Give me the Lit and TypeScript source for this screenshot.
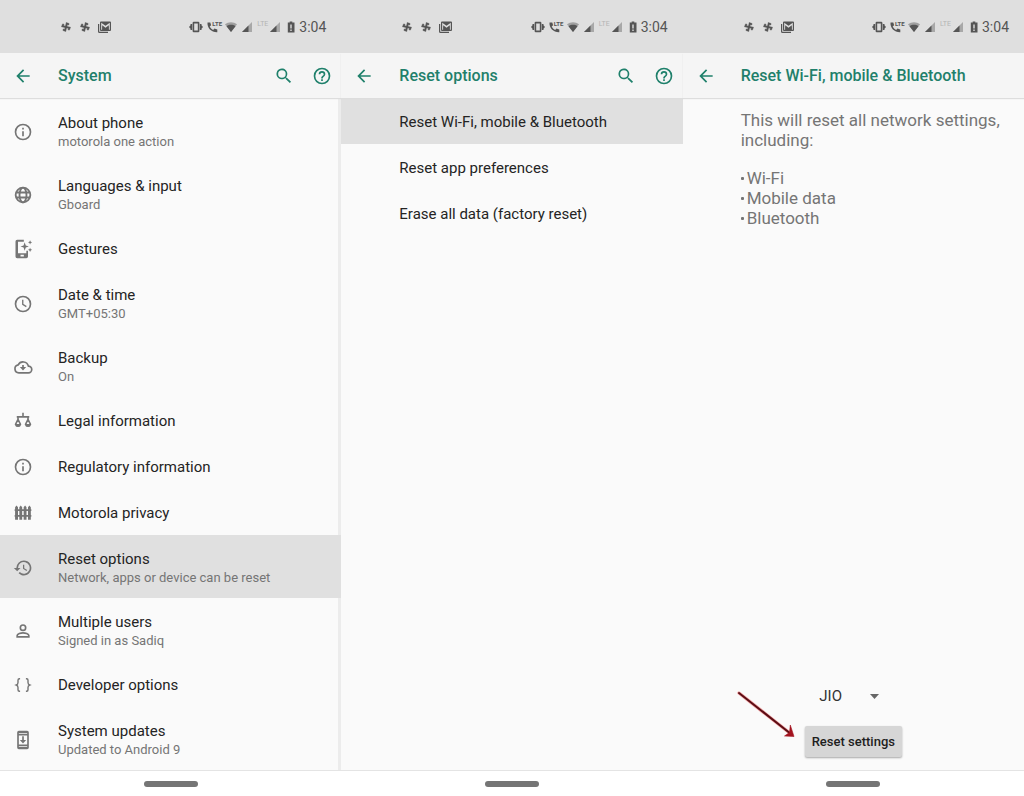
import { LitElement, html, css, svg, nothing } from "lit";
import { customElement, property } from "lit/decorators.js";

const glyphs: Record<string, unknown> = {
  back: svg`<path d="M20 11H7.800l5.600-5.600L12 4l-8 8 8 8 1.400-1.400L7.800 13H20z"/>`,
  search: svg`<path d="M15.500 14h-.8l-.3-.3A6.500 6.500 0 1 0 13.700 14.400l.3.3v.8l5 5 1.500-1.500zm-6 0a4.500 4.500 0 1 1 0-9 4.500 4.500 0 0 1 0 9z"/>`,
  help: svg`<path d="M11 18h2v-2h-2zM12 2a10 10 0 1 0 0 20 10 10 0 0 0 0-20zm0 18a8 8 0 1 1 0-16 8 8 0 0 1 0 16zm0-14a4 4 0 0 0-4 4h2a2 2 0 1 1 4 0c0 2-3 1.800-3 5h2c0-2.200 3-2.500 3-5a4 4 0 0 0-4-4z"/>`,
  info: svg`<path d="M11 7h2v2h-2zm0 4h2v6h-2zM12 2a10 10 0 1 0 0 20 10 10 0 0 0 0-20zm0 18a8 8 0 1 1 0-16 8 8 0 0 1 0 16z"/>`,
  globe: svg`<g fill="none" stroke="currentColor" stroke-width="2.200"><circle cx="12" cy="12" r="8.800"/><ellipse cx="12" cy="12" rx="4.200" ry="8.800"/><path d="M3.600 9h16.800M3.600 15h16.800"/></g>`,
  gestures: svg`<path d="M5 1h8v2.200H6V17h10v-3h2v7a2 2 0 0 1-2 2H5a2 2 0 0 1-2-2V3a2 2 0 0 1 2-2zm4 18v2h4v-2zM14 4l1.300 3.700L19 9l-3.700 1.300L14 14l-1.300-3.700L9 9l3.700-1.300zM20.500 1.500l.8 1.700 1.700.8-1.700.8-.8 1.700-.8-1.700-1.700-.8 1.700-.8zM20.500 10.500l.8 1.700 1.700.8-1.700.8-.8 1.700-.8-1.700-1.700-.8 1.700-.8z"/>`,
  clock: svg`<g fill="none" stroke="currentColor" stroke-width="2"><circle cx="12" cy="12" r="9"/><path d="M11.700 7v5.500l4.300 2.600" stroke-width="1.600"/></g>`,
  backup: svg`<path fill="none" stroke="currentColor" stroke-width="2" d="M18.500 11A6.600 6.600 0 0 0 6.200 9.500 4.800 4.800 0 0 0 7 19h11.500a4 4 0 0 0 0-8z"/><path d="M11 9.500h2V12h2.800L12 16.300 8.200 12H11z"/>`,
  legal: svg`<path fill="none" stroke="currentColor" stroke-width="1.900" d="M12 2v5M4.500 7h15M6 7v3M18 7v3"/><path fill="none" stroke="currentColor" stroke-width="1.900" stroke-linejoin="round" d="M6 10l-3 6a3.100 3.100 0 0 0 6 0zM18 10l-3 6a3.100 3.100 0 0 0 6 0z"/><path d="M3 15.500h6l-1 3H4zM15 15.500h6l-1 3h-4z"/>`,
  fence: svg`<path d="M2.500 5l1.700-2L6 5v15H2.500zM7.600 5l1.700-2L11 5v15H7.600zM12.800 5l1.700-2 1.700 2v15h-3.400zM18 5l1.700-2 1.700 2v15H18zM2 7.500h20v2H2zM2 14.500h20v2H2z"/>`,
  restore: svg`<path d="M13 3a9 9 0 0 0-9 9H1l4 4 4-4H6a7 7 0 1 1 2.100 4.900l-1.400 1.500A9 9 0 1 0 13 3zm-1 5v5l4.200 2.500.8-1.200-3.500-2.100V8z"/>`,
  person: svg`<g fill="none" stroke="currentColor" stroke-width="2"><circle cx="12" cy="8" r="3.200"/><path d="M5 19v-1.500c0-2 4.500-3.300 7-3.300s7 1.300 7 3.300V19z"/></g>`,
  braces: svg`<path fill="none" stroke="currentColor" stroke-width="1.700" d="M8.500 4.500H7.700C6.500 4.500 6 5.200 6 6.300V9c0 1.500-.6 2.500-2 3 1.400.5 2 1.500 2 3v2.700c0 1.100.5 1.800 1.700 1.800h.8M15.500 4.500h.8c1.200 0 1.700.7 1.700 1.800V9c0 1.500.6 2.500 2 3-1.400.5-2 1.500-2 3v2.700c0 1.100-.5 1.800-1.700 1.800h-.8"/>`,
  update: svg`<path fill-rule="evenodd" d="M17 1H7a2 2 0 0 0-2 2v18a2 2 0 0 0 2 2h10a2 2 0 0 0 2-2V3a2 2 0 0 0-2-2zM7 3.500h10v1H7zM7 19.500h10v1H7zM7 6.500h10v11H7z"/><path d="M11 7.500h2V12h2.800L12 16.300 8.200 12H11z"/>`,
};

const icon = (name: string) =>
  html`<svg class="icon" viewBox="0 0 24 24" fill="currentColor" aria-hidden="true">${glyphs[name]}</svg>`;

const iconStyles = css`
  .icon {
    display: block;
    flex: none;
    width: 20px;
    height: 20px;
  }
`;

@customElement("status-bar")
class StatusBar extends LitElement {
  static styles = css`
    :host {
      display: flex;
      align-items: center;
      justify-content: space-between;
      box-sizing: border-box;
      height: 53px;
      padding: 0 15px 0 60px;
      background: #dfdfdf;
      color: #555;
      font-size: 14px;
      line-height: 16px;
    }
    .group {
      display: flex;
      align-items: center;
    }
    .notices {
      gap: 7px;
    }
    .signals {
      gap: 4px;
    }
    svg {
      display: block;
      height: 14px;
      fill: currentColor;
    }
    .call {
      display: flex;
      align-items: flex-start;
      width: 14px;
    }
    .call svg {
      flex: none;
    }
    .tag {
      margin-left: -6px;
      font-size: 6px;
      line-height: 7px;
      font-weight: 700;
    }
    .lte {
      color: #b4b4b4;
      font-size: 7px;
      line-height: 8px;
      padding-bottom: 5px;
      margin-right: -3px;
    }
    .battery {
      margin-left: 2px;
    }
  `;

  private fan() {
    return html`<svg width="12" viewBox="0 0 12 14" aria-hidden="true">
      <g transform="rotate(12 6 7)" stroke="currentColor" stroke-width=".4"><path d="M5.300 7V2.500L8.300 3v1.500H6.800V7zM6 6.300h4.500L10 9.300H8.500V7.800H6zM6.700 7v4.500L3.700 11V9.500h1.500V7zM6 7.700H1.500L2 4.700h1.500v1.500H6z"/></g>
    </svg>`;
  }

  private signal() {
    return html`<svg width="12" viewBox="0 0 12 14" aria-hidden="true">
      <path opacity=".4" d="M11 2v10H1z"/><path d="M7.500 5.500V12H1z"/>
    </svg>`;
  }

  render() {
    return html`
      <div class="group notices">
        ${this.fan()}${this.fan()}
        <svg width="13" viewBox="0 0 13 14" aria-hidden="true">
          <path d="M0 4h1.200v7.800H10V13H1.500A1.500 1.500 0 0 1 0 11.500z"/>
          <path fill-rule="evenodd" d="M3 1.500h9a1 1 0 0 1 1 1v7.500a1 1 0 0 1-1 1H3a1 1 0 0 1-1-1V2.500a1 1 0 0 1 1-1zM3.200 2.700v7.100h1V5.200l3.300 2.500 3.300-2.500v4.600h1V2.700L7.500 5.800z"/>
          <path opacity=".6" d="M4.200 6.500l3.300 2.400 3.300-2.400v3.400H4.200z"/>
        </svg>
      </div>
      <div class="group signals">
        <svg width="14" viewBox="0 0 14 14" aria-hidden="true">
          <path fill-rule="evenodd" d="M4.800 1.800h4.400a1.200 1.200 0 0 1 1.200 1.200v8a1.200 1.200 0 0 1-1.200 1.200H4.800A1.200 1.200 0 0 1 3.600 11V3a1.200 1.200 0 0 1 1.200-1.200zM5.200 3.500v7h3.600v-7z"/>
          <path d="M1.500 4h1.700v6H1.500V8.700L0 7l1.500-1.700zM12.500 4h-1.700v6h1.700V8.700L14 7l-1.500-1.700z"/>
        </svg>
        <span class="call">
          <svg width="11" viewBox="0 0 11 14" aria-hidden="true">
            <path d="M.5 2.500H3.300l.8 2.700-1.400 1.400c.7 1.500 1.900 2.600 3.400 3.400L7.500 8.600l2.800.9V12.300C4.500 12.500 0 8 .5 2.500z"/>
          </svg>
          <span class="tag">LTE</span>
        </span>
        <svg width="12" viewBox="0 0 12 14" aria-hidden="true">
          <path opacity=".45" d="M0 4.300C3.500 1.600 8.500 1.600 12 4.300L6 12z"/>
          <path d="M1.500 6.200c2.700-1.900 6.300-1.900 9 0L6 12z"/>
        </svg>
        ${this.signal()}
        <span class="lte">LTE</span>
        ${this.signal()}
        <svg class="battery" width="8" viewBox="0 0 8 14" aria-hidden="true">
          <path fill-rule="evenodd" d="M2.700 1.500h2.600v1H7.500V12.500H.8V2.500h1.900zM3.300 4.500v4h1.400v-4zM3.300 9.500v1.400h1.400V9.500z"/>
        </svg>
        <time>3:04</time>
      </div>
    `;
  }
}

@customElement("phone-screen")
class PhoneScreen extends LitElement {
  @property() heading = "";
  @property({ type: Boolean }) tools = false;
  @property({ type: Boolean, reflect: true }) edge = false;

  static styles = [
    iconStyles,
    css`
      :host {
        display: flex;
        flex-direction: column;
        min-width: 0;
      }
      .bar {
        display: flex;
        align-items: center;
        gap: 18px;
        box-sizing: border-box;
        height: 45px;
        padding: 0 9px 0 13px;
        background: #f5f5f5;
        color: #1f806b;
        box-shadow: 0 1px 1px #ddd;
        z-index: 1;
      }
      button {
        border: 0;
        padding: 0;
        background: none;
        color: inherit;
      }
      h1 {
        flex: 1;
        margin: 0 0 0 7px;
        font-size: 16px;
        line-height: 20px;
        font-weight: 500;
        white-space: nowrap;
      }
      .content {
        flex: 1;
        display: flex;
        flex-direction: column;
        background: #fafafa;
      }
      :host([edge]) .content {
        border-right: 3px solid #ececec;
      }
      .home {
        display: flex;
        justify-content: center;
        align-items: center;
        box-sizing: border-box;
        height: 26px;
        border-top: 1px solid #e4e4e4;
        background: #fff;
      }
      .pill {
        width: 54px;
        height: 6px;
        border-radius: 3px;
        background: #757575;
      }
    `,
  ];

  render() {
    return html`
      <status-bar></status-bar>
      <header class="bar">
        <button aria-label="Back">${icon("back")}</button>
        <h1>${this.heading}</h1>
        ${this.tools
          ? html`<button aria-label="Search">${icon("search")}</button>
              <button aria-label="Help">${icon("help")}</button>`
          : nothing}
      </header>
      <main class="content"><slot></slot></main>
      <footer class="home"><button aria-label="Home" class="pill"></button></footer>
    `;
  }
}

interface Entry {
  title: string;
  note?: string;
  glyph?: string;
  selected?: boolean;
}

const systemEntries: Entry[] = [
  { title: "About phone", note: "motorola one action", glyph: "info" },
  { title: "Languages & input", note: "Gboard", glyph: "globe" },
  { title: "Gestures", glyph: "gestures" },
  { title: "Date & time", note: "GMT+05:30", glyph: "clock" },
  { title: "Backup", note: "On", glyph: "backup" },
  { title: "Legal information", glyph: "legal" },
  { title: "Regulatory information", glyph: "info" },
  { title: "Motorola privacy", glyph: "fence" },
  { title: "Reset options", note: "Network, apps or device can be reset", glyph: "restore", selected: true },
  { title: "Multiple users", note: "Signed in as Sadiq", glyph: "person" },
  { title: "Developer options", glyph: "braces" },
  { title: "System updates", note: "Updated to Android 9", glyph: "update" },
];

const resetEntries: Entry[] = [
  { title: "Reset Wi-Fi, mobile & Bluetooth", selected: true },
  { title: "Reset app preferences" },
  { title: "Erase all data (factory reset)" },
];

@customElement("settings-list")
class SettingsList extends LitElement {
  @property({ attribute: false }) entries: Entry[] = [];

  static styles = [
    iconStyles,
    css`
      :host {
        display: block;
      }
      ul {
        display: flex;
        flex-direction: column;
        margin: 0;
        padding: 1px 0 0;
        list-style: none;
      }
      .row {
        display: flex;
        align-items: center;
        gap: 25px;
        box-sizing: border-box;
        min-height: 46px;
        padding: 2px 13px 0;
        color: #757575;
        text-decoration: none;
      }
      .tall {
        min-height: 63px;
      }
      .selected {
        background: #e0e0e0;
        margin-right: -3px;
      }
      .plain {
        gap: 1px;
      }
      .plain .row {
        min-height: 45px;
        padding: 0 13px 0 58px;
      }
      .plain .selected {
        margin-right: 0;
      }
      .title,
      .note {
        display: block;
        white-space: nowrap;
      }
      .title {
        color: #242424;
        font-size: 15px;
        line-height: 20px;
      }
      .note {
        font-size: 13px;
        line-height: 18px;
      }
    `,
  ];

  render() {
    const plain = !this.entries.some((e) => e.glyph);
    return html`<ul class=${plain ? "plain" : ""}>
      ${this.entries.map(
        (e) => html`<li>
          <a href="#" class="row ${e.note ? "tall" : ""} ${e.selected ? "selected" : ""}">
            ${e.glyph ? icon(e.glyph) : nothing}
            <span>
              <span class="title">${e.title}</span>
              ${e.note ? html`<span class="note">${e.note}</span>` : nothing}
            </span>
          </a>
        </li>`
      )}
    </ul>`;
  }
}

@customElement("reset-network")
class ResetNetwork extends LitElement {
  static styles = css`
    :host {
      flex: 1;
      display: flex;
      flex-direction: column;
      justify-content: space-between;
      padding: 12px 16px 13px 58px;
      color: #757575;
      font-size: 17px;
      line-height: 20px;
    }
    p {
      margin: 0 0 18px;
    }
    ul {
      margin: 0;
      padding: 0;
      list-style: none;
    }
    li {
      display: flex;
      align-items: center;
      gap: 3px;
    }
    li::before {
      content: "";
      width: 3px;
      height: 3px;
      border-radius: 1px;
      background: #757575;
    }
    .actions {
      position: relative;
      align-self: center;
      display: flex;
      flex-direction: column;
      align-items: center;
      gap: 18px;
      margin-right: 42px;
    }
    .picker {
      display: flex;
      align-items: center;
      position: relative;
    }
    select {
      appearance: none;
      width: 68px;
      height: 24px;
      padding: 0;
      border: 0;
      background: none;
      color: #333;
      font: inherit;
      font-size: 15px;
      line-height: 20px;
    }
    .caret {
      position: absolute;
      right: 8px;
      width: 9px;
      height: 5px;
      fill: #666;
      pointer-events: none;
    }
    button {
      height: 31px;
      padding: 0 7px;
      border: 0;
      border-radius: 2px;
      background: #d6d6d6;
      box-shadow: 0 1px 2px #0005;
      color: #1e1e1e;
      font: inherit;
      font-size: 13px;
      font-weight: 500;
      line-height: 18px;
      white-space: nowrap;
    }
    .pointer {
      position: absolute;
      right: 100%;
      bottom: 17px;
      margin-right: 8px;
      width: 62px;
      height: 52px;
    }
  `;

  render() {
    return html`
      <div>
        <p>This will reset all network settings, including:</p>
        <ul>
          <li>Wi-Fi</li>
          <li>Mobile data</li>
          <li>Bluetooth</li>
        </ul>
      </div>
      <div class="actions">
        <div class="picker">
          <select aria-label="SIM card"><option>JIO</option></select>
          <svg class="caret" viewBox="0 0 9 5" aria-hidden="true"><path d="M0 0h9L4.500 5z"/></svg>
        </div>
        <button>Reset settings</button>
        <svg class="pointer" viewBox="0 0 62 52" aria-hidden="true">
          <path d="M4 5L56 46" fill="none" stroke="#f4a9a9" stroke-width="3.500" stroke-linecap="round"/>
          <path d="M4 5L56 46" fill="none" stroke="#5c0d14" stroke-width="2" stroke-linecap="round"/>
          <path d="M59 48.500L49.500 48l5-3.500.8-7.500z" fill="#a3121f" stroke="#a3121f" stroke-width=".6" stroke-linejoin="round"/>
        </svg>
      </div>
    `;
  }
}

@customElement("app-root")
class AppRoot extends LitElement {
  static styles = css`
    :host {
      display: grid;
      grid-template-columns: repeat(3, 1fr);
      min-height: 100vh;
      font-family: Roboto, "Noto Sans", sans-serif;
    }
  `;

  render() {
    return html`
      <phone-screen heading="System" tools edge>
        <settings-list .entries=${systemEntries}></settings-list>
      </phone-screen>
      <phone-screen heading="Reset options" tools>
        <settings-list .entries=${resetEntries}></settings-list>
      </phone-screen>
      <phone-screen heading="Reset Wi-Fi, mobile &amp; Bluetooth">
        <reset-network></reset-network>
      </phone-screen>
    `;
  }
}
